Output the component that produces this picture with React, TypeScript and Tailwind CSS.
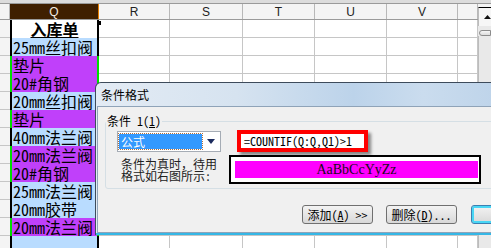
import React from "react";

type Fill = "w" | "b" | "p";

const rows: { text: string; fill: Fill }[] = [
  { text: "入库单", fill: "w" },
  { text: "25mm丝扣阀", fill: "b" },
  { text: "垫片", fill: "p" },
  { text: "20#角钢", fill: "p" },
  { text: "20mm丝扣阀", fill: "b" },
  { text: "垫片", fill: "p" },
  { text: "40mm法兰阀", fill: "b" },
  { text: "20mm法兰阀", fill: "p" },
  { text: "20#角钢", fill: "p" },
  { text: "25mm法兰阀", fill: "b" },
  { text: "20mm胶带", fill: "b" },
  { text: "20mm法兰阀", fill: "p" },
  { text: "", fill: "b" },
];

const cols = [
  { label: "R", w: "w-[71px]" },
  { label: "S", w: "w-[73px]" },
  { label: "T", w: "w-[72px]" },
  { label: "U", w: "w-[72px]" },
  { label: "V", w: "w-[71px]" },
  { label: "", w: "w-[20px]" },
];

const mono = "font-['Noto_Sans_Mono_CJK_SC','Liberation_Mono','Noto_Sans_CJK_SC',monospace]";

function Sheet() {
  return (
    <div className="w-[478px] shrink-0">
      {/* column headers */}
      <div className="flex h-[17px] border-y border-[#9a9a9a] bg-[#f4f4f4] font-['Liberation_Sans',sans-serif] text-[12px] text-[#222]">
        <div className="w-[10px] border-r border-[#b8b8b8]" />
        <div className="w-[89px] bg-[#3f1f00] text-[#f3ece4] border-r border-[#e67e00] flex items-center justify-center">Q</div>
        {cols.map((c, i) => (
          <div key={i} className={`${c.w} border-r border-[#b8b8b8] flex items-center justify-center`}>{c.label}</div>
        ))}
      </div>

      {/* rows */}
      {rows.map((r, i) => {
        const bg = r.fill === "p" ? "bg-[#c040fa]" : r.fill === "b" ? "bg-[#b9dcff]" : "bg-white";
        const edge = r.fill === "p" ? "border-[#00dd00]" : "border-black";
        return (
          <div key={i} className="flex h-[18px]">
            <div className="w-[10px] bg-[#f4f4f4] border-b border-[#c6c6c6]" />
            <div className={`w-[89px] border-x-2 ${edge} ${bg} ${mono} text-[16px] leading-[18px] whitespace-nowrap text-black ${i === 0 ? "text-center font-bold underline text-[15px]" : "pl-[1px]"}`}>
              {r.text}
            </div>
            {cols.map((c, j) => (
              <div key={j} className={`${c.w} border-r border-b border-[#c6c6c6]`} />
            ))}
          </div>
        );
      })}
    </div>
  );
}

function Scrollbar() {
  return (
    <div className="w-[13px] h-[245px] shrink-0 flex flex-col bg-[#e9e9e9]">
      <div className="h-[4px] bg-[#f4f4f4] border-t border-[#9a9a9a]" />
      <div className="h-[19px] border-t border-black border-l border-l-[#bcbcbc] bg-[#f6f6f6] flex items-center pl-[5px]">
        <svg width="7" height="4" viewBox="0 0 7 4"><path d="M3.5 0L7 4H0z" fill="#111" /></svg>
      </div>
      <div className="mt-[4px] ml-[1px] h-[6px] rounded-l-[3px] border border-[#8c8c8c] bg-gradient-to-b from-[#f6f6f6] to-[#dcdcdc]" />
      <div className="flex-1 border-l border-[#bcbcbc]" />
    </div>
  );
}

const btn = "shrink-0 w-[71px] h-[19px] rounded-[3px] border bg-gradient-to-b from-[#f3f3f3] to-[#d8d8d8] leading-none whitespace-nowrap text-[12px]";

function Dialog() {
  return (
    <div className="absolute left-[95px] top-[82px] w-[470px] border border-b-0 border-[#3d4b5b] rounded-t-[6px] bg-[linear-gradient(90deg,#e3ebf4_0%,#d6e3f0_30%,#bcd3ea_55%,#cadcee_70%,#b3cce6_100%)] flex flex-col">
      <div className="h-[23px] flex items-center pl-[5px] text-[12px] text-black font-['Noto_Sans_CJK_SC',sans-serif]">条件格式</div>
      <div className={`ml-[1px] h-[127px] border border-[#8fa3b8] bg-[#f0f0f0] ${mono} text-[12px] text-black`}>
        <fieldset className="ml-[7px] mt-[7px] w-[430px] border border-[#d5dfe5] rounded-[3px] pb-[4px]">
          <legend className="px-[1px] leading-[14px]">
            条件 1(<span className="underline">1</span>)
          </legend>
          <div className="flex items-start mt-[2px] pl-[11px]">
            <div className="shrink-0 mt-[1px] w-[104px] h-[21px] bg-white border border-[#a5acb5] flex items-center pl-[1px]">
              <div className="w-[83px] h-[15px] bg-[#3399ff] outline-1 outline-dotted outline-[#b07040] text-white leading-[15px] pl-[2px]">公式</div>
              <div className="flex-1 flex justify-center">
                <svg width="8" height="5" viewBox="0 0 8 5"><path d="M0 0H8L4 5z" fill="#1c2b5e" /></svg>
              </div>
            </div>
            <div className="shrink-0 ml-[16px] w-[131px] h-[22px] border-4 border-[#ff0000] bg-white shadow-[3px_3px_3px_rgba(0,0,0,0.45)] flex items-center pl-[3px]">
              <span className="whitespace-nowrap">=COUNTIF(Q:Q,Q1)&gt;1</span>
            </div>
          </div>
          <div className="flex mt-[3px] pl-[15px]">
            <div className="shrink-0 w-[108px] pt-[3px] leading-[12px] text-[#222]">
              <div>条件为真时，待用</div>
              <div>格式如右图所示:</div>
            </div>
            <div className="shrink-0 w-[252px] h-[29px] border-2 border-black bg-white pt-[4px] pl-[4px] pr-[1px]">
              <div className="h-[17px] bg-[#ff00ff] flex items-center justify-center font-['Liberation_Serif',serif] text-[14px] text-[#1a0a1a]">AaBbCcYyZz</div>
            </div>
          </div>
        </fieldset>
        <div className="flex mt-[16px] pl-[204px]">
          <button className={`${btn} border-[#707070]`}>
            添加(<span className="underline">A</span>) &gt;&gt;
          </button>
          <button className={`${btn} ml-[13px] border-[#707070]`}>
            删除(<span className="underline">D</span>)...
          </button>
          <button className={`${btn} ml-[14px] border-[#3c7fb1] shadow-[inset_0_0_0_2px_#48d6f5]`}>
            确定
          </button>
        </div>
      </div>
      <div className="h-[2px] bg-[#35b7e6]" />
    </div>
  );
}

export default function App() {
  return (
    <div className="relative w-[491px] h-[248px] overflow-hidden bg-white">
      <div className="h-[3px] bg-[#dcdcdc]" />
      <div className="flex">
        <Sheet />
        <Scrollbar />
      </div>
      {/* fill handle */}
      <div className="absolute left-[97px] top-[21px] w-[4px] h-[4px] bg-black" />
      <Dialog />
    </div>
  );
}
